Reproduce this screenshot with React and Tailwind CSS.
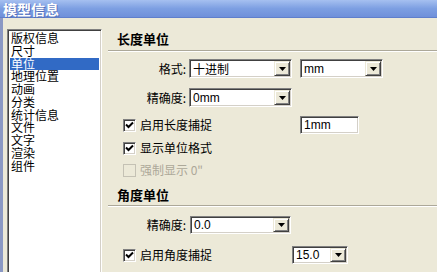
import React from "react";

const sunken =
  "border border-t-[#808080] border-l-[#808080] border-r-white border-b-white shadow-[inset_1px_1px_0_#404040,inset_-1px_-1px_0_#d4d0c8]";

function DropBtn() {
  return (
    <div className="w-[16px] h-full shrink-0 bg-[#ece9d8] border border-t-[#ece9d8] border-l-[#ece9d8] border-r-[#404040] border-b-[#404040] shadow-[inset_1px_1px_0_#fff,inset_-1px_-1px_0_#808080] flex items-center justify-center">
      <svg width="7" height="4" viewBox="0 0 7 4">
        <path d="M0 0H7L3.5 4Z" fill="#000" />
      </svg>
    </div>
  );
}

function Select({ value, w, latin }) {
  return (
    <div className={`${sunken} ${w} h-full bg-white flex p-[1px]`}>
      <div
        className={`flex-1 flex items-center pl-[2px] overflow-hidden whitespace-nowrap ${
          latin ? "font-['Liberation_Sans',sans-serif] text-[12px]" : "text-[12px]"
        }`}
      >
        {value}
      </div>
      <DropBtn />
    </div>
  );
}

function Check({ checked = true, disabled = false }) {
  return (
    <div
      className={`w-[13px] h-[13px] shrink-0 border flex items-center justify-center ${
        disabled
          ? "border-[#c4c1b4] bg-[#ece9d8]"
          : "border-t-[#808080] border-l-[#808080] border-r-white border-b-white shadow-[inset_1px_1px_0_#404040,inset_-1px_-1px_0_#d4d0c8] bg-white"
      }`}
    >
      {checked && (
        <svg width="9" height="9" viewBox="0 0 9 9">
          <path d="M1 3.5 L3.5 6 L8 1.5" stroke="#000" strokeWidth="2" fill="none" />
        </svg>
      )}
    </div>
  );
}

const items = [
  "版权信息",
  "尺寸",
  "单位",
  "地理位置",
  "动画",
  "分类",
  "统计信息",
  "文件",
  "文字",
  "渲染",
  "组件",
];

export default function App() {
  return (
    <div className="w-[437px] h-[272px] overflow-hidden bg-[#ece9d8] flex flex-col font-['Noto_Sans_CJK_SC',sans-serif] text-[12px] text-black">
      <div className="h-[18px] shrink-0 bg-gradient-to-b from-[#a6c0f0] via-[#7d9fe2] to-[#6f90da] border-b border-[#5f7fcc] flex items-center pl-[3px]">
        <span className="text-[14px] font-bold text-white leading-none [text-shadow:1px_1px_0_#5570b8]">
          模型信息
        </span>
      </div>
      <div className="flex-1 flex border-l-[3px] border-[#8a98c4] min-h-0">
        <div className="pl-[4px] pt-[11px] w-[99px] shrink-0">
          <div className={`${sunken} h-[260px] bg-white p-[2px]`}>
            {items.map((t) => (
              <div
                key={t}
                className={`h-[12.75px] leading-[12.75px] pl-[1px] whitespace-nowrap ${
                  t === "单位" ? "bg-[#316ac5] text-white" : ""
                }`}
              >
                {t}
              </div>
            ))}
          </div>
        </div>
        <div className="flex-1 flex flex-col">
          <div className="mt-[14px] h-[14px] pl-[15px] text-[13px] font-bold leading-[14px]">
            长度单位
          </div>
          <div className="mt-[4px] ml-[6px] h-[2px] border-t border-b border-t-[#aca899] border-b-white" />
          <div className="mt-[7px] h-[19px] flex">
            <div className="w-[84px] text-right leading-[19px]">格式:</div>
            <div className="ml-[3px] flex h-full">
              <Select value="十进制" w="w-[103px]" />
              <div className="ml-[8px] h-full flex">
                <Select value="mm" w="w-[83px]" latin />
              </div>
            </div>
          </div>
          <div className="mt-[10px] h-[19px] flex">
            <div className="w-[84px] text-right leading-[19px]">精确度:</div>
            <div className="ml-[3px] flex h-full">
              <Select value="0mm" w="w-[103px]" latin />
            </div>
          </div>
          <div className="mt-[9px] h-[18px] flex items-center">
            <div className="w-[198px] flex items-center pl-[21px]">
              <Check />
              <span className="ml-[4px] leading-none">启用长度捕捉</span>
            </div>
            <div className={`${sunken} w-[59px] h-full bg-white flex items-center pl-[3px] font-['Liberation_Sans',sans-serif]`}>
              1mm
            </div>
          </div>
          <div className="mt-[3px] h-[22px] flex items-center pl-[21px]">
            <Check />
            <span className="ml-[4px] leading-none">显示单位格式</span>
          </div>
          <div className="h-[22px] flex items-center pl-[21px]">
            <Check checked={false} disabled />
            <span className="ml-[4px] leading-none text-[#aca899]">强制显示 0"</span>
          </div>
          <div className="mt-[7px] h-[14px] pl-[15px] text-[13px] font-bold leading-[14px]">
            角度单位
          </div>
          <div className="mt-[3px] ml-[6px] h-[2px] border-t border-b border-t-[#aca899] border-b-white" />
          <div className="mt-[9px] h-[18px] flex">
            <div className="w-[84px] text-right leading-[18px]">精确度:</div>
            <div className="ml-[4px] flex h-full">
              <Select value="0.0" w="w-[101px]" latin />
            </div>
          </div>
          <div className="mt-[12px] h-[18px] flex items-center">
            <div className="w-[190px] flex items-center pl-[21px]">
              <Check />
              <span className="ml-[4px] leading-none">启用角度捕捉</span>
            </div>
            <div className="h-full flex">
              <Select value="15.0" w="w-[56px]" latin />
            </div>
          </div>
        </div>
      </div>
    </div>
  );
}
